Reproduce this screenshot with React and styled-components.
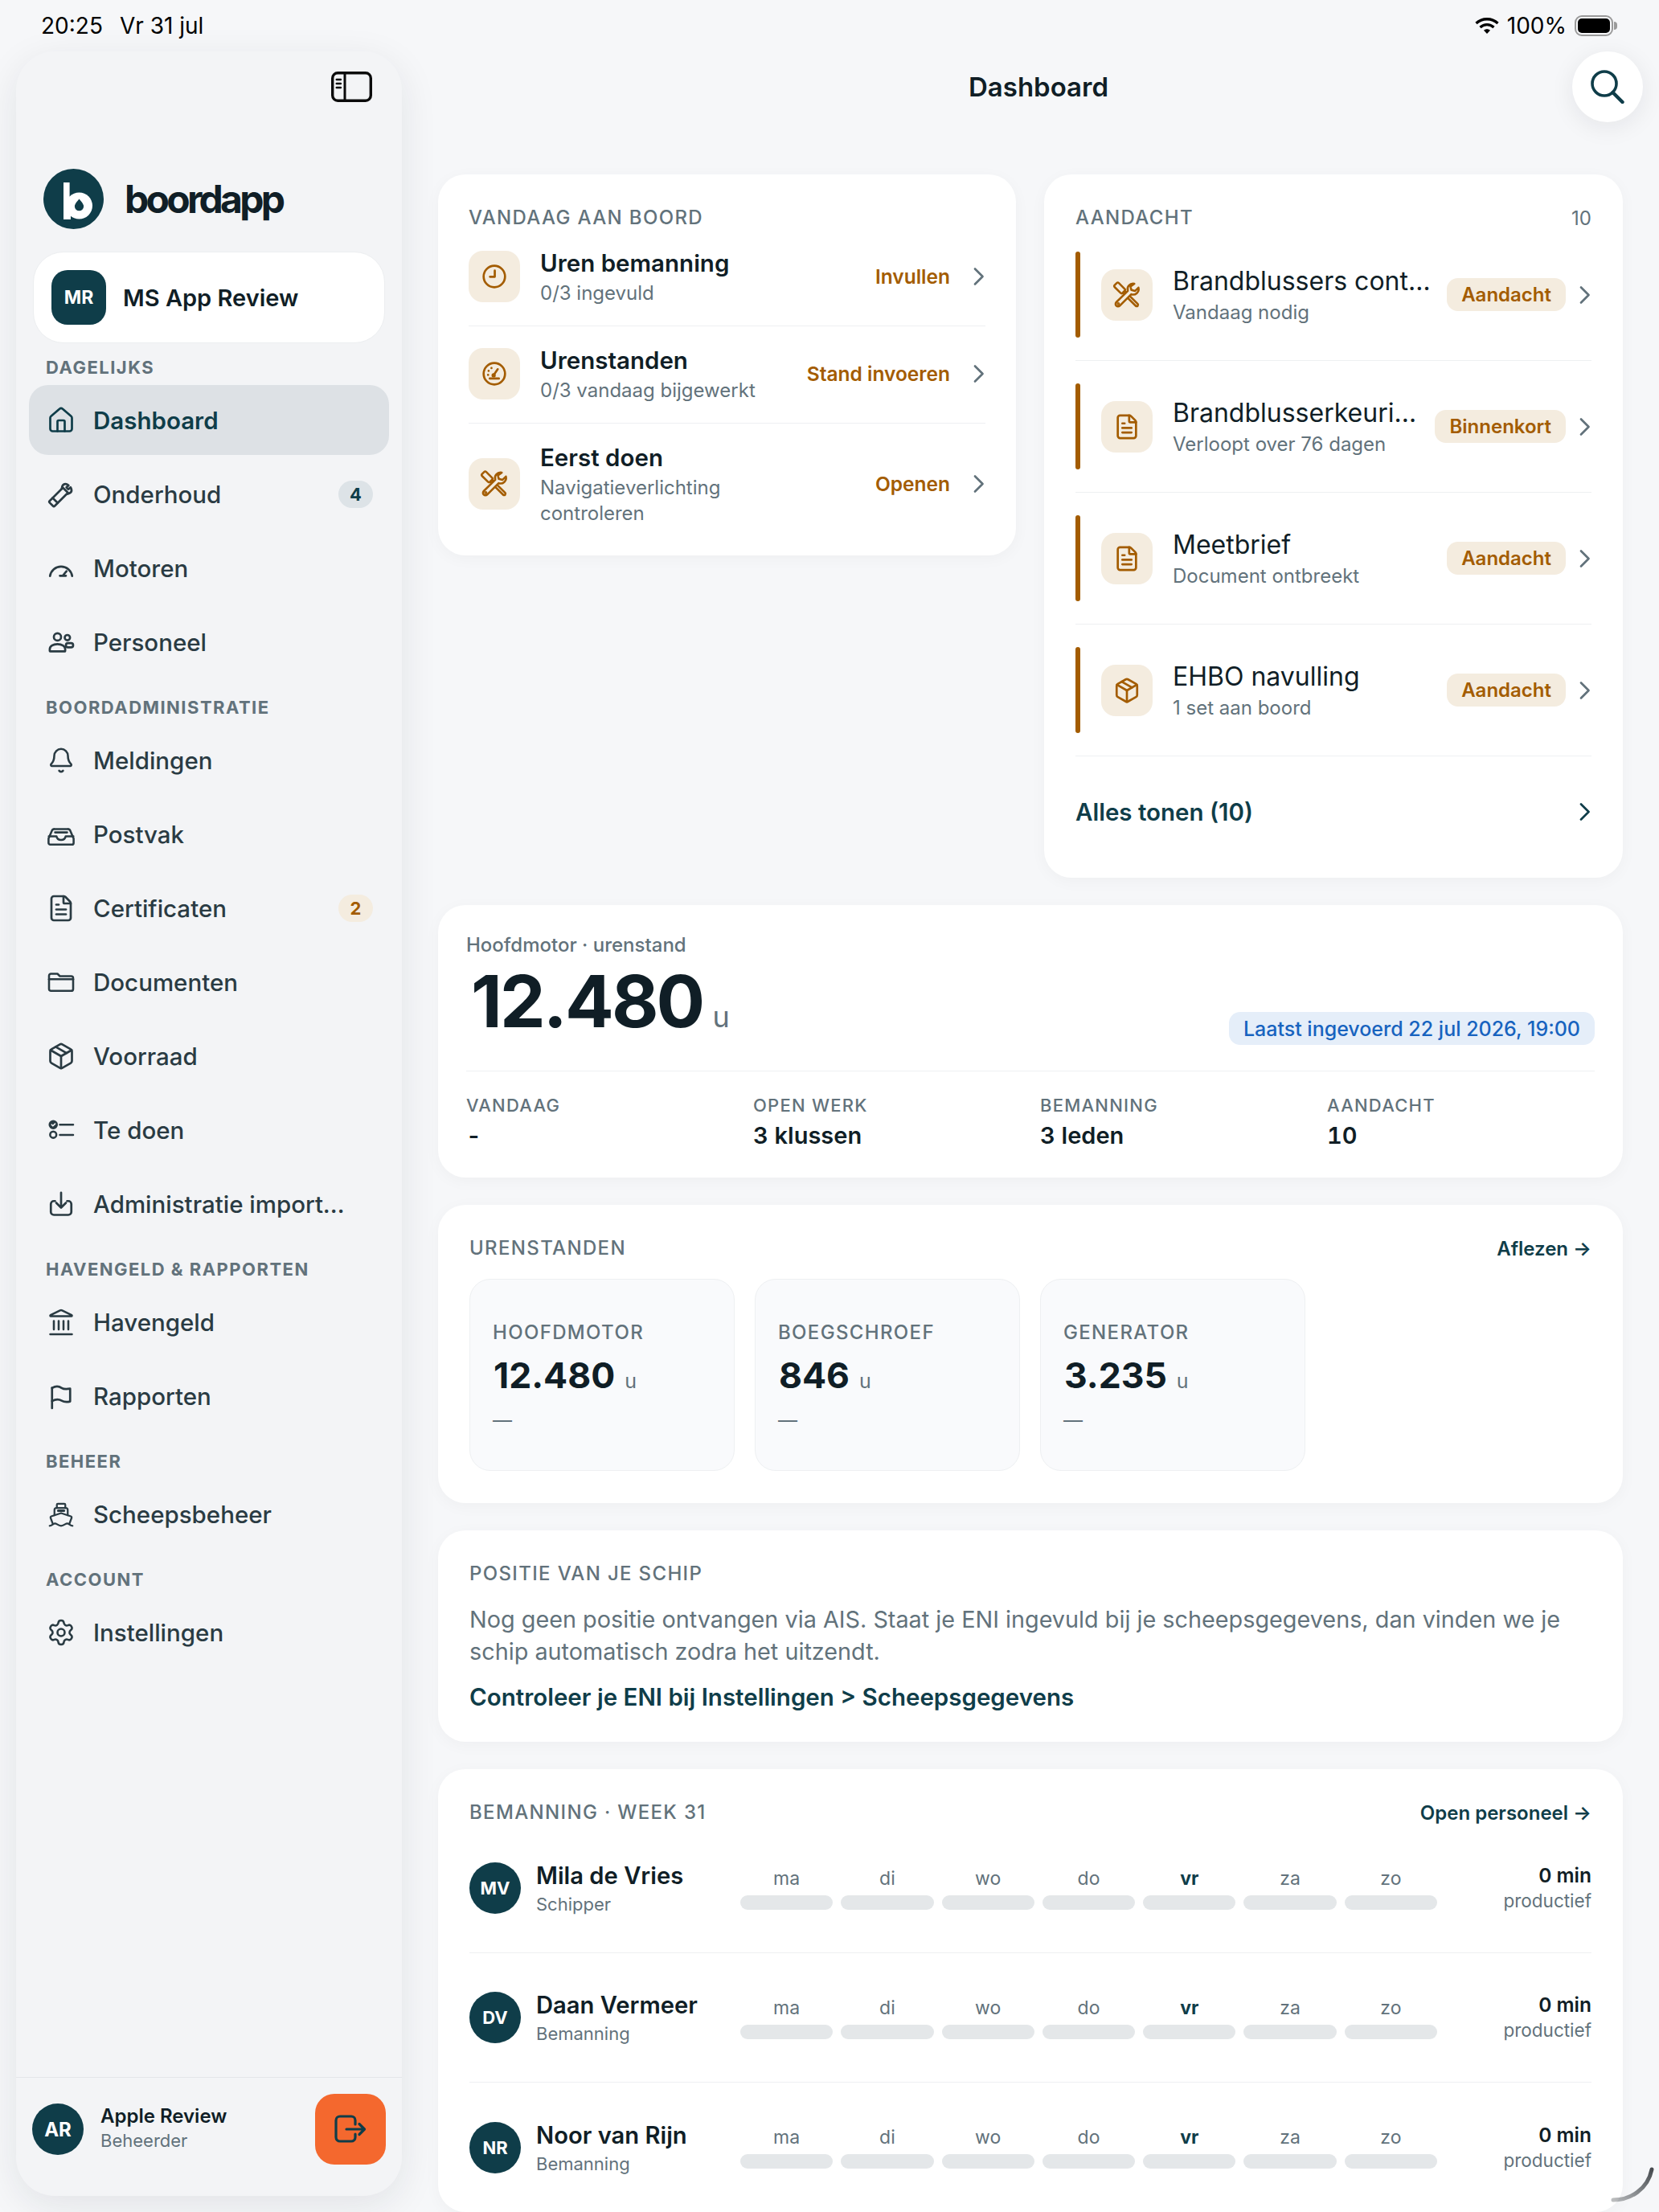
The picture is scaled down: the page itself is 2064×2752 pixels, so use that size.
import React from "react";
import styled, { createGlobalStyle } from "styled-components";
import { House, Bell, Package, Landmark, Settings, FileText } from "lucide-react";

const TEAL = "#0f3d49";
const INK = "#101e26";
const GREY = "#62727b";
const AMBER = "#a35c00";
const AMBER_BG = "#f4ecdf";
const LINE = "#eef0f2";

const Global = createGlobalStyle`
  html, body { margin: 0; padding: 0; background: #f6f7f9; }
  * { box-sizing: border-box; }
  body { font-family: Inter, "Liberation Sans", sans-serif; color: ${INK}; }
`;

const Page = styled.div`
  position: relative;
  width: 2064px;
  height: 2752px;
  overflow: hidden;
  background: #f6f7f9;
`;
const StatusBar = styled.div`
  position: relative;
  z-index: 3;
  height: 64px;
  padding: 0 51px;
  display: flex;
  align-items: center;
  justify-content: space-between;
  font-size: 28px;
  color: #000;
`;
const StatusGroup = styled.div`
  display: flex;
  align-items: center;
  gap: ${(p) => p.$gap || 21}px;
`;
const Battery = styled.div`
  position: relative;
  width: 48px;
  height: 26px;
  border: 2px solid #9a9a9a;
  border-radius: 9px;
  padding: 2px;
  margin-right: 6px;
  &::before {
    content: "";
    display: block;
    height: 100%;
    border-radius: 5px;
    background: #000;
  }
  &::after {
    content: "";
    position: absolute;
    right: -7px;
    top: 6px;
    width: 4px;
    height: 10px;
    border-radius: 0 4px 4px 0;
    background: #9a9a9a;
  }
`;
const Shell = styled.div`
  display: grid;
  grid-template-columns: 480px 1fr;
  column-gap: 45px;
  padding-left: 20px;
`;
const Sidebar = styled.aside`
  height: 2668px;
  background: #f3f4f6;
  border-radius: 48px;
  box-shadow: 0 12px 48px rgba(20, 30, 40, 0.09);
  display: flex;
  flex-direction: column;
`;
const ToggleRow = styled.div`
  display: flex;
  justify-content: flex-end;
  padding: 25px 37px 0 0;
  height: 64px;
`;
const LogoRow = styled.div`
  display: flex;
  align-items: center;
  gap: 26px;
  margin-top: 82px;
  padding-left: 34px;
`;
const LogoSvg = styled.svg`
  flex: none;
`;
const Wordmark = styled.div`
  font-size: 48px;
  font-weight: 700;
  letter-spacing: -0.078em;
  color: ${INK};
  line-height: 75px;
`;
const ShipCard = styled.div`
  margin: 28px 21px 0;
  height: 114px;
  background: #fff;
  border: 1px solid #eceef0;
  border-radius: 38px;
  display: flex;
  align-items: center;
  gap: 21px;
  padding-left: 22px;
`;
const ShipBadge = styled.div`
  width: 68px;
  height: 68px;
  border-radius: 20px;
  background: ${TEAL};
  color: #fff;
  font-size: 23px;
  font-weight: 700;
  display: flex;
  align-items: center;
  justify-content: center;
`;
const ShipName = styled.div`
  font-size: 29px;
  font-weight: 600;
  color: ${INK};
`;
const Nav = styled.nav`
  padding: 0 16px;
  display: flex;
  flex-direction: column;
`;
const NavLabel = styled.div`
  font-size: 22px;
  line-height: 26px;
  font-weight: 700;
  letter-spacing: 0.067em;
  color: ${GREY};
  padding-left: 21px;
  margin-top: ${(p) => p.$top}px;
  margin-bottom: 9px;
`;
const NavItem = styled.div`
  height: 87px;
  margin-bottom: 5px;
  flex: none;
  border-radius: 24px;
  display: flex;
  align-items: center;
  gap: 22px;
  padding: 0 20px 0 22px;
  font-size: 29.5px;
  font-weight: ${(p) => (p.$active ? 600 : 500)};
  color: ${(p) => (p.$active ? TEAL : "#2a3b43")};
  background: ${(p) => (p.$active ? "#dde1e5" : "transparent")};
`;
const NavIcon = styled.span`
  width: 36px;
  height: 36px;
  flex: none;
  display: flex;
  align-items: center;
  justify-content: center;
`;
const NavText = styled.span`
  max-width: 320px;
  min-width: 0;
  white-space: nowrap;
  overflow: hidden;
  text-overflow: ellipsis;
`;
const CountBadge = styled.span`
  width: 43px;
  height: 34px;
  flex: none;
  margin-left: auto;
  border-radius: 17px;
  display: flex;
  align-items: center;
  justify-content: center;
  font-size: 22px;
  font-weight: 700;
  background: ${(p) => (p.$warm ? AMBER_BG : "#dde3e7")};
  color: ${(p) => (p.$warm ? AMBER : TEAL)};
`;
const SideFooter = styled.div`
  margin-top: auto;
  height: 148px;
  border-top: 1px solid #e4e6e9;
  padding: 20px 20px 0;
  display: flex;
  align-items: flex-start;
  gap: 21px;
`;
const Avatar = styled.div`
  width: 64px;
  height: 64px;
  flex: none;
  border-radius: 50%;
  background: ${TEAL};
  color: #fff;
  font-size: 22px;
  font-weight: 700;
  display: flex;
  align-items: center;
  justify-content: center;
`;
const FooterAvatar = styled(Avatar)`
  margin-top: 12px;
  font-size: 24px;
`;
const FooterText = styled.div`
  flex: 1;
  padding-top: 13px;
`;
const FooterName = styled.div`
  font-size: 24px;
  line-height: 30px;
  font-weight: 600;
  color: ${INK};
`;
const FooterRole = styled.div`
  font-size: 22px;
  line-height: 30px;
  color: ${GREY};
`;
const LogoutButton = styled.div`
  width: 88px;
  height: 88px;
  border-radius: 24px;
  background: #f4682e;
  display: flex;
  align-items: center;
  justify-content: center;
`;

const Main = styled.main`
  position: relative;
  z-index: 1;
  height: 2688px;
  background: #f6f7f9;
  padding-right: 45px;
`;
const Header = styled.header`
  display: grid;
  grid-template-columns: 1fr auto 1fr;
  align-items: center;
  height: 88px;
  margin-right: -25px;
  margin-bottom: 65px;
`;
const Title = styled.h1`
  grid-column: 2;
  margin: 0;
  padding-right: 5px;
  font-size: 33px;
  font-weight: 600;
  color: ${INK};
`;
const SearchButton = styled.div`
  grid-column: 3;
  justify-self: end;
  width: 88px;
  height: 88px;
  border-radius: 50%;
  background: #fff;
  box-shadow: 0 6px 30px rgba(20, 30, 40, 0.08);
  display: flex;
  align-items: center;
  justify-content: center;
  color: ${TEAL};
`;
const TopGrid = styled.div`
  display: grid;
  grid-template-columns: 719px 720px;
  column-gap: 35px;
  align-items: start;
`;
const Card = styled.section`
  background: #fff;
  border-radius: 34px;
  box-shadow: 0 4px 20px rgba(20, 30, 40, 0.035);
  margin-bottom: ${(p) => (p.$flush ? 0 : 34)}px;
`;
const TodayCard = styled(Card)`
  height: 474px;
  padding: 40px 38px 0;
`;
const AttentionCard = styled(Card)`
  height: 875px;
  padding: 40px 39px 0;
`;
const SectionHead = styled.div`
  display: flex;
  justify-content: space-between;
  align-items: center;
  height: 28px;
`;
const Eyebrow = styled.div`
  font-size: 24px;
  line-height: 28px;
  font-weight: 500;
  letter-spacing: 0.056em;
  color: ${GREY};
`;
const StatLabel = styled(Eyebrow)`
  font-size: 22px;
`;
const Count = styled.div`
  font-size: 24px;
  color: ${GREY};
`;
const HeadLink = styled.div`
  font-size: 24px;
  font-weight: 600;
  color: ${TEAL};
`;
const TodayRow = styled.div`
  display: flex;
  align-items: center;
  gap: 25px;
  padding: 22px 0 24px;
  border-bottom: ${(p) => (p.$last ? "none" : `1px solid ${LINE}`)};
`;
const IconBox = styled.div`
  width: 64px;
  height: 64px;
  flex: none;
  border-radius: 18px;
  background: ${AMBER_BG};
  color: ${AMBER};
  display: flex;
  align-items: center;
  justify-content: center;
`;
const RowText = styled.div`
  flex: 1;
  min-width: 0;
`;
const RowTitle = styled.div`
  font-size: 29.5px;
  line-height: 40px;
  font-weight: 600;
  color: ${INK};
`;
const RowSub = styled.div`
  margin-top: 2px;
  font-size: 24px;
  line-height: 32px;
  color: ${GREY};
`;
const RowAction = styled.div`
  margin-right: 3px;
  font-size: 24.5px;
  font-weight: 600;
  color: ${AMBER};
  white-space: nowrap;
`;
const ChevronSvg = styled.svg`
  flex: none;
`;
const AlertRow = styled.div`
  display: flex;
  align-items: center;
  padding-bottom: 28px;
  margin-top: 28px;
  border-bottom: 1px solid ${LINE};
`;
const AlertBar = styled.div`
  width: 6px;
  height: 107px;
  flex: none;
  border-radius: 3px;
  background: ${AMBER};
  margin-right: 26px;
`;
const AlertText = styled.div`
  flex: 1;
  min-width: 0;
  margin: 0 18px 0 25px;
`;
const AlertTitle = styled.div`
  font-size: 32px;
  line-height: 44px;
  font-weight: 400;
  color: ${INK};
  white-space: nowrap;
  overflow: hidden;
  text-overflow: ellipsis;
`;
const AlertSub = styled.div`
  margin-top: 1px;
  font-size: 24px;
  line-height: 32px;
  color: ${GREY};
`;
const Pill = styled.div`
  height: 41px;
  flex: none;
  padding: 0 18px;
  margin-right: 16px;
  border-radius: 14px;
  background: ${AMBER_BG};
  color: ${AMBER};
  font-size: 24px;
  font-weight: 600;
  display: flex;
  align-items: center;
`;
const AllRow = styled.div`
  margin-top: 49px;
  display: flex;
  align-items: center;
  justify-content: space-between;
  font-size: 29.5px;
  line-height: 40px;
  font-weight: 600;
  color: ${TEAL};
`;
const EngineCard = styled(Card)`
  padding: 35px 35px 32px;
`;
const EngineLabel = styled.div`
  font-size: 24px;
  line-height: 30px;
  font-weight: 500;
  color: ${GREY};
`;
const EngineRow = styled.div`
  display: flex;
  justify-content: space-between;
  align-items: flex-end;
  height: 109px;
`;
const Hero = styled.div`
  align-self: flex-start;
  margin-top: 5px;
  padding-left: 6px;
  display: flex;
  align-items: baseline;
  gap: 12px;
`;
const HeroValue = styled.span`
  font-size: 90px;
  line-height: 100px;
  font-weight: 700;
  letter-spacing: -0.032em;
  color: ${INK};
`;
const HeroUnit = styled.span`
  font-size: 36px;
  color: ${GREY};
`;
const BluePill = styled.div`
  height: 41px;
  padding: 0 18px;
  border-radius: 14px;
  background: #e5eef9;
  color: #1763bf;
  font-size: 25px;
  font-weight: 500;
  display: flex;
  align-items: center;
`;
const StatGrid = styled.div`
  margin-top: 32px;
  padding-top: 28px;
  border-top: 1px solid ${LINE};
  display: grid;
  grid-template-columns: repeat(4, 333px);
  column-gap: 24px;
`;
const StatValue = styled.div`
  margin-top: 4px;
  font-size: 29px;
  line-height: 40px;
  font-weight: 600;
  font-variant-numeric: tabular-nums;
  color: ${INK};
`;
const HoursCard = styled(Card)`
  padding: 40px 39px;
`;
const HoursGrid = styled.div`
  margin-top: 24px;
  display: grid;
  grid-template-columns: repeat(4, 330px);
  column-gap: 25px;
`;
const HoursBox = styled.div`
  height: 239px;
  padding: 52px 28px 0;
  background: #f9fafc;
  border: 1px solid ${LINE};
  border-radius: 26px;
`;
const HoursValue = styled.div`
  margin-top: 9px;
  padding-left: 1px;
  display: flex;
  align-items: baseline;
  gap: 12px;
`;
const HoursNumber = styled.span`
  font-size: 44.5px;
  line-height: 60px;
  font-weight: 700;
  color: ${INK};
`;
const HoursUnit = styled.span`
  font-size: 25px;
  color: ${GREY};
`;
const HoursDash = styled.div`
  margin-top: 11px;
  font-size: 24px;
  line-height: 30px;
  color: ${GREY};
`;
const PositionCard = styled(Card)`
  padding: 40px 39px 36px;
`;
const PositionText = styled.p`
  margin: 23px 0 16px;
  font-size: 28.8px;
  line-height: 40px;
  color: ${GREY};
`;
const PositionLink = styled.div`
  font-size: 29.5px;
  line-height: 40px;
  font-weight: 600;
  color: ${TEAL};
`;
const CrewCard = styled(Card)`
  padding: 40px 39px 0;
`;
const CrewRow = styled.div`
  height: 161px;
  display: grid;
  grid-template-columns: 337px 867px 1fr;
  align-items: center;
  border-bottom: ${(p) => (p.$last ? "none" : `1px solid ${LINE}`)};
`;
const CrewPerson = styled.div`
  display: flex;
  align-items: center;
  gap: 19px;
`;
const CrewName = styled.div`
  font-size: 29.2px;
  line-height: 40px;
  font-weight: 600;
  color: ${INK};
`;
const CrewRole = styled.div`
  font-size: 22px;
  line-height: 30px;
  color: ${GREY};
`;
const Week = styled.div`
  display: grid;
  grid-template-columns: repeat(7, 1fr);
  column-gap: 10px;
`;
const DayName = styled.div`
  text-align: center;
  font-size: 23px;
  line-height: 28px;
  font-weight: ${(p) => (p.$today ? 700 : 400)};
  color: ${(p) => (p.$today ? TEAL : GREY)};
`;
const DayBar = styled.div`
  height: 18px;
  margin-top: 7px;
  border-radius: 9px;
  background: #e4e7e9;
`;
const CrewTotal = styled.div`
  text-align: right;
`;
const TotalValue = styled.div`
  font-size: 24.5px;
  line-height: 31px;
  font-weight: 600;
  color: ${INK};
`;
const TotalLabel = styled.div`
  font-size: 22.5px;
  line-height: 31px;
  color: ${GREY};
`;
const CornerMark = styled.svg`
  position: absolute;
  right: 6px;
  bottom: 12px;
  z-index: 4;
`;

const Chevron = ({ color = GREY }) => (
  <ChevronSvg width="16" height="24" viewBox="0 0 16 24" fill="none" stroke={color} strokeWidth="2.7" strokeLinecap="round" strokeLinejoin="round">
    <path d="M3 2.5 12.5 12 3 21.5" />
  </ChevronSvg>
);

const line = { fill: "none", stroke: "currentColor", strokeLinecap: "round", strokeLinejoin: "round" };
const Ico = ({ size = 36, children, sw }) => (
  <svg width={size} height={size} viewBox="0 0 24 24" {...line} strokeWidth={sw || 1.8}>{children}</svg>
);

const HammerIcon = () => (
  <Ico>
    <path d="M2.5 17.5 5 15l4.2 4.2-2.5 2.5a1 1 0 0 1-1.4 0l-2.8-2.8a1 1 0 0 1 0-1.4Z" />
    <path d="m5 15 8.5-8.5 4.2 4.2-8.5 8.5" />
    <path d="M12.5 7.5 13 5.2a2.8 2.8 0 0 1 4-1.4l1.2.8-1.8 1.6 1.6 1.6 1.9-1.6.6 1.4a2.8 2.8 0 0 1-1.4 3.4l-1.6.7" />
  </Ico>
);
const GaugeIcon = () => (
  <Ico size={36}>
    <path d="M2.8 18.5a9.3 9.3 0 0 1 18.4 0" />
    <path d="M11 18.2h5M13.5 18l3-3.6" />
  </Ico>
);
const PeopleIcon = () => (
  <Ico size={36}>
    <circle cx="9" cy="7.6" r="3" />
    <path d="M2.6 19.2v-1.4c0-2.4 2.6-4.2 6.4-4.2s6.4 1.8 6.4 4.2v1.4a.4.4 0 0 1-.4.4H3a.4.4 0 0 1-.4-.4Z" />
    <circle cx="17.2" cy="8.2" r="2.2" />
    <rect x="16" y="12.8" width="6" height="3.4" rx="1.7" />
  </Ico>
);
const TrayIcon = () => (
  <Ico size={38} sw={1.7}>
    <path d="M1.6 15.5 4.4 9a2.4 2.4 0 0 1 2.2-1.4h10.8A2.4 2.4 0 0 1 19.6 9l2.8 6.5v3.6a1.4 1.4 0 0 1-1.4 1.4H3a1.4 1.4 0 0 1-1.4-1.4Z" />
    <path d="M1.8 13.7h6.4c.4 2 1.8 3 3.8 3s3.4-1 3.8-3h6.4M7 10.4h10" />
  </Ico>
);
const FolderIcon = () => (
  <Ico size={38} sw={1.7}>
    <path d="M2 17.6V6.6A1.6 1.6 0 0 1 3.6 5H9l2 2h9.4A1.6 1.6 0 0 1 22 8.6v9a1.6 1.6 0 0 1-1.6 1.6H3.6A1.6 1.6 0 0 1 2 17.6Z" />
    <path d="M2 9.5h20" />
  </Ico>
);
const TodoIcon = () => (
  <Ico size={38} sw={1.7}>
    <circle cx="5.5" cy="7.5" r="3" fill="currentColor" />
    <path d="m4.2 7.5 1 1 1.8-1.8" stroke="#f3f4f6" strokeWidth="1.1" />
    <circle cx="5.5" cy="15.8" r="2.6" />
    <path d="M11 7.5h11M11 16h11" />
  </Ico>
);
const ImportIcon = () => (
  <Ico size={36}>
    <path d="M7 9.5H6a2.5 2.5 0 0 0-2.5 2.5v6.5A2.5 2.5 0 0 0 6 21h12a2.5 2.5 0 0 0 2.5-2.5V12A2.5 2.5 0 0 0 18 9.5h-1" />
    <path d="M12 2.5v12M8 11l4 4 4-4" />
  </Ico>
);
const FlagIcon = () => (
  <Ico size={36}>
    <path d="M4.5 22V5" />
    <path d="M4.5 5.2c3-1.8 6-1.4 8 0s4.6 1 7 .6v10.6c-2.6.6-5 .6-7-.6s-5-1.4-8 .3" />
  </Ico>
);
const ShipIcon = () => (
  <Ico size={40} sw={1.5}>
    <path d="M8.5 6.8V4a.8.8 0 0 1 .8-.8h5.4a.8.8 0 0 1 .8.8v2.8" />
    <path d="M6.5 12.8V8.4a1.6 1.6 0 0 1 1.6-1.6h7.8a1.6 1.6 0 0 1 1.6 1.6v4.4" />
    <path d="M9.6 9h4.8" strokeWidth="2" />
    <path d="M5 19.5 3.3 15a1 1 0 0 1 .6-1.3L12 11l8.1 2.7a1 1 0 0 1 .6 1.3L19 19.5" />
    <path d="M2.5 21.5c2.4 0 3-2 4.4-2s2.6 2 5.1 2 3.7-2 5.1-2 2 2 4.4 2" />
  </Ico>
);
const ClockIcon = () => (
  <Ico size={34} sw={1.9}>
    <circle cx="12" cy="12" r="9.4" />
    <path d="M12.4 6.8v5.4H8.2" />
  </Ico>
);
const DialIcon = () => (
  <Ico size={34} sw={1.9}>
    <circle cx="12" cy="12" r="9.4" />
    <path d="m11.5 13 3.5-5" />
    <circle cx="11.4" cy="13.4" r=".9" fill="currentColor" />
    <path d="M7 9.5v.01M9.5 7v.01M6.5 13v.01M8 16.2h8" />
  </Ico>
);
const ToolsIcon = () => (
  <svg width="36" height="36" viewBox="0 0 24 24" fill="none" stroke="currentColor" strokeWidth="1.7" strokeLinejoin="round" strokeLinecap="round">
    <rect x="-2.4" y="-4.6" width="4.8" height="9.2" rx="1.2" transform="translate(6 6.2) rotate(-45)" />
    <path d="M8.6 10.4 10.2 8.8 21 19.4a1.2 1.2 0 0 1 0 1.6 1.2 1.2 0 0 1-1.7 0Z" />
    <path d="M18.2 2.6a4.6 4.6 0 0 0-5.4 6L3.2 18a2 2 0 0 0 2.9 2.9l9.5-9.5a4.6 4.6 0 0 0 6-5.5l-2.9 2.8-3-.8-.7-2.9Z" fill="#f4ecdf" />
    <circle cx="4.9" cy="19.3" r=".5" fill="currentColor" />
  </svg>
);
const ToggleIcon = () => (
  <svg width="51" height="38" viewBox="0 0 51 38" fill="none" stroke="#0b0b0b" strokeWidth="3.4" strokeLinecap="round">
    <rect x="1.7" y="1.7" width="47.6" height="34.6" rx="6.5" />
    <path d="M17 2v34" strokeWidth="3" />
    <path d="M6.8 10h5M6.8 15h5M6.8 20h5" strokeWidth="2.6" />
  </svg>
);
const LogoMark = () => (
  <LogoSvg width="75" height="75" viewBox="0 0 75 75">
    <circle cx="37.5" cy="37.5" r="37.5" fill={TEAL} />
    <rect x="25" y="17" width="7.6" height="46" fill="#fff" />
    <circle cx="44.5" cy="46" r="16.5" fill="#fff" />
    <path d="M28 63h6v-6h-6Z" fill="#fff" />
    <path d="M44.5 37.5c2.6 3.4 5.6 6 5.6 9.2a5.6 5.6 0 0 1-11.2 0c0-3.2 3-5.8 5.6-9.2Z" fill={TEAL} />
  </LogoSvg>
);
const LogoutIcon = () => (
  <svg width="40" height="36" viewBox="0 0 40 36" fill="none" stroke={TEAL} strokeWidth="3.2" strokeLinecap="round" strokeLinejoin="round">
    <path d="M26 12V7a5 5 0 0 0-5-5H7a5 5 0 0 0-5 5v21a5 5 0 0 0 5 5h14a5 5 0 0 0 5-5v-4" />
    <path d="M15 18h22M31 11.5l6.5 6.5-6.5 6.5" />
  </svg>
);
const WifiIcon = () => (
  <svg width="30" height="20" viewBox="0 0 30 20" fill="none" stroke="#000" strokeWidth="3.3">
    <path d="M1.5 7C9 0 21 0 28.5 7M6.5 12c5-4.6 12-4.6 17 0" />
    <path d="M11 15.8c2.4-2 5.6-2 8 0L15 20Z" fill="#000" stroke="none" />
  </svg>
);
const SearchIcon = () => (
  <svg width="42" height="42" viewBox="0 0 42 42" fill="none" stroke="currentColor" strokeWidth="3.6" strokeLinecap="round">
    <circle cx="17" cy="17" r="15" />
    <path d="M27.5 28 39.5 40" strokeWidth="4.4" />
  </svg>
);

const navSections = [
  { items: [
    { label: "Dashboard", icon: <House size={36} strokeWidth={1.8} />, active: true },
    { label: "Onderhoud", icon: <HammerIcon />, count: 4 },
    { label: "Motoren", icon: <GaugeIcon /> },
    { label: "Personeel", icon: <PeopleIcon /> },
  ], title: "DAGELIJKS", top: 17 },
  { title: "BOORDADMINISTRATIE", top: 20, items: [
    { label: "Meldingen", icon: <Bell size={34} strokeWidth={1.8} /> },
    { label: "Postvak", icon: <TrayIcon /> },
    { label: "Certificaten", icon: <FileText size={36} strokeWidth={1.8} />, count: 2, warm: true },
    { label: "Documenten", icon: <FolderIcon /> },
    { label: "Voorraad", icon: <Package size={36} strokeWidth={1.8} /> },
    { label: "Te doen", icon: <TodoIcon /> },
    { label: "Administratie importeren", icon: <ImportIcon /> },
  ] },
  { title: "HAVENGELD & RAPPORTEN", top: 20, items: [
    { label: "Havengeld", icon: <Landmark size={36} strokeWidth={1.7} /> },
    { label: "Rapporten", icon: <FlagIcon /> },
  ] },
  { title: "BEHEER", top: 20, items: [{ label: "Scheepsbeheer", icon: <ShipIcon /> }] },
  { title: "ACCOUNT", top: 20, items: [{ label: "Instellingen", icon: <Settings size={36} strokeWidth={1.7} /> }] },
];

const today = [
  { title: "Uren bemanning", sub: "0/3 ingevuld", action: "Invullen", icon: <ClockIcon /> },
  { title: "Urenstanden", sub: "0/3 vandaag bijgewerkt", action: "Stand invoeren", icon: <DialIcon /> },
  { title: "Eerst doen", sub: <>Navigatieverlichting<br />controleren</>, action: "Openen", icon: <ToolsIcon /> },
];
const alerts = [
  { title: "Brandblussers controleren", sub: "Vandaag nodig", pill: "Aandacht", icon: <ToolsIcon /> },
  { title: "Brandblusserkeuring laten doen", sub: "Verloopt over 76 dagen", pill: "Binnenkort", icon: <FileText size={34} strokeWidth={1.9} /> },
  { title: "Meetbrief", sub: "Document ontbreekt", pill: "Aandacht", icon: <FileText size={34} strokeWidth={1.9} /> },
  { title: "EHBO navulling", sub: "1 set aan boord", pill: "Aandacht", icon: <Package size={34} strokeWidth={1.9} /> },
];
const stats = [
  ["VANDAAG", "-"],
  ["OPEN WERK", "3 klussen"],
  ["BEMANNING", "3 leden"],
  ["AANDACHT", "10"],
];
const hours = [
  ["HOOFDMOTOR", "12.480"],
  ["BOEGSCHROEF", "846"],
  ["GENERATOR", "3.235"],
];
const crew = [
  { code: "MV", name: "Mila de Vries", role: "Schipper" },
  { code: "DV", name: "Daan Vermeer", role: "Bemanning" },
  { code: "NR", name: "Noor van Rijn", role: "Bemanning" },
];
const days = ["ma", "di", "wo", "do", "vr", "za", "zo"];

export default function App() {
  return (
    <Page>
      <Global />
      <StatusBar>
        <StatusGroup><span>20:25</span><span>Vr 31 jul</span></StatusGroup>
        <StatusGroup $gap={10}><WifiIcon /><span>100%</span><Battery /></StatusGroup>
      </StatusBar>
      <Shell>
        <Sidebar>
          <ToggleRow><ToggleIcon /></ToggleRow>
          <LogoRow><LogoMark /><Wordmark>boordapp</Wordmark></LogoRow>
          <ShipCard><ShipBadge>MR</ShipBadge><ShipName>MS App Review</ShipName></ShipCard>
          <Nav>
            {navSections.map((s) => (
              <React.Fragment key={s.title}>
                <NavLabel $top={s.top}>{s.title}</NavLabel>
                {s.items.map((i) => (
                  <NavItem key={i.label} $active={i.active}>
                    <NavIcon>{i.icon}</NavIcon>
                    <NavText>{i.label}</NavText>
                    {i.count && <CountBadge $warm={i.warm}>{i.count}</CountBadge>}
                  </NavItem>
                ))}
              </React.Fragment>
            ))}
          </Nav>
          <SideFooter>
            <FooterAvatar>AR</FooterAvatar>
            <FooterText>
              <FooterName>Apple Review</FooterName>
              <FooterRole>Beheerder</FooterRole>
            </FooterText>
            <LogoutButton><LogoutIcon /></LogoutButton>
          </SideFooter>
        </Sidebar>
        <Main>
          <Header>
            <Title>Dashboard</Title>
            <SearchButton><SearchIcon /></SearchButton>
          </Header>
          <TopGrid>
            <TodayCard>
              <SectionHead><Eyebrow>VANDAAG AAN BOORD</Eyebrow></SectionHead>
              {today.map((r, n) => (
                <TodayRow key={r.title} $last={n === today.length - 1}>
                  <IconBox>{r.icon}</IconBox>
                  <RowText>
                    <RowTitle>{r.title}</RowTitle>
                    <RowSub>{r.sub}</RowSub>
                  </RowText>
                  <RowAction>{r.action}</RowAction>
                  <Chevron />
                </TodayRow>
              ))}
            </TodayCard>
            <AttentionCard>
              <SectionHead><Eyebrow>AANDACHT</Eyebrow><Count>10</Count></SectionHead>
              {alerts.map((a) => (
                <AlertRow key={a.title}>
                  <AlertBar />
                  <IconBox>{a.icon}</IconBox>
                  <AlertText>
                    <AlertTitle>{a.title}</AlertTitle>
                    <AlertSub>{a.sub}</AlertSub>
                  </AlertText>
                  <Pill>{a.pill}</Pill>
                  <Chevron />
                </AlertRow>
              ))}
              <AllRow><span>Alles tonen (10)</span><Chevron color={TEAL} /></AllRow>
            </AttentionCard>
          </TopGrid>
          <EngineCard>
            <EngineLabel>Hoofdmotor · urenstand</EngineLabel>
            <EngineRow>
              <Hero><HeroValue>12.480</HeroValue><HeroUnit>u</HeroUnit></Hero>
              <BluePill>Laatst ingevoerd 22 jul 2026, 19:00</BluePill>
            </EngineRow>
            <StatGrid>
              {stats.map(([k, v]) => (
                <div key={k}>
                  <StatLabel>{k}</StatLabel>
                  <StatValue>{v}</StatValue>
                </div>
              ))}
            </StatGrid>
          </EngineCard>
          <HoursCard>
            <SectionHead><Eyebrow>URENSTANDEN</Eyebrow><HeadLink>Aflezen →</HeadLink></SectionHead>
            <HoursGrid>
              {hours.map(([k, v]) => (
                <HoursBox key={k}>
                  <Eyebrow>{k}</Eyebrow>
                  <HoursValue><HoursNumber>{v}</HoursNumber><HoursUnit>u</HoursUnit></HoursValue>
                  <HoursDash>—</HoursDash>
                </HoursBox>
              ))}
            </HoursGrid>
          </HoursCard>
          <PositionCard>
            <SectionHead><Eyebrow>POSITIE VAN JE SCHIP</Eyebrow></SectionHead>
            <PositionText>Nog geen positie ontvangen via AIS. Staat je ENI ingevuld bij je scheepsgegevens, dan vinden we je schip automatisch zodra het uitzendt.</PositionText>
            <PositionLink>Controleer je ENI bij Instellingen &gt; Scheepsgegevens</PositionLink>
          </PositionCard>
          <CrewCard $flush>
            <SectionHead><Eyebrow>BEMANNING · WEEK 31</Eyebrow><HeadLink>Open personeel →</HeadLink></SectionHead>
            {crew.map((c, n) => (
              <CrewRow key={c.code} $last={n === crew.length - 1}>
                <CrewPerson>
                  <Avatar>{c.code}</Avatar>
                  <div>
                    <CrewName>{c.name}</CrewName>
                    <CrewRole>{c.role}</CrewRole>
                  </div>
                </CrewPerson>
                <Week>
                  {days.map((d) => (
                    <div key={d}>
                      <DayName $today={d === "vr"}>{d}</DayName>
                      <DayBar />
                    </div>
                  ))}
                </Week>
                <CrewTotal>
                  <TotalValue>0 min</TotalValue>
                  <TotalLabel>productief</TotalLabel>
                </CrewTotal>
              </CrewRow>
            ))}
          </CrewCard>
        </Main>
      </Shell>
      <CornerMark width="54" height="44" viewBox="0 0 54 44" fill="none">
        <defs>
          <linearGradient id="cornerFade" x1="0" y1="1" x2="1" y2="0">
            <stop offset="0" stopColor="#3e4347" stopOpacity="0.35" />
            <stop offset="1" stopColor="#3e4347" stopOpacity="0.95" />
          </linearGradient>
        </defs>
        <path d="M3 41C24 41 46 28 51 3" stroke="url(#cornerFade)" strokeWidth="5" strokeLinecap="round" />
      </CornerMark>
    </Page>
  );
}
